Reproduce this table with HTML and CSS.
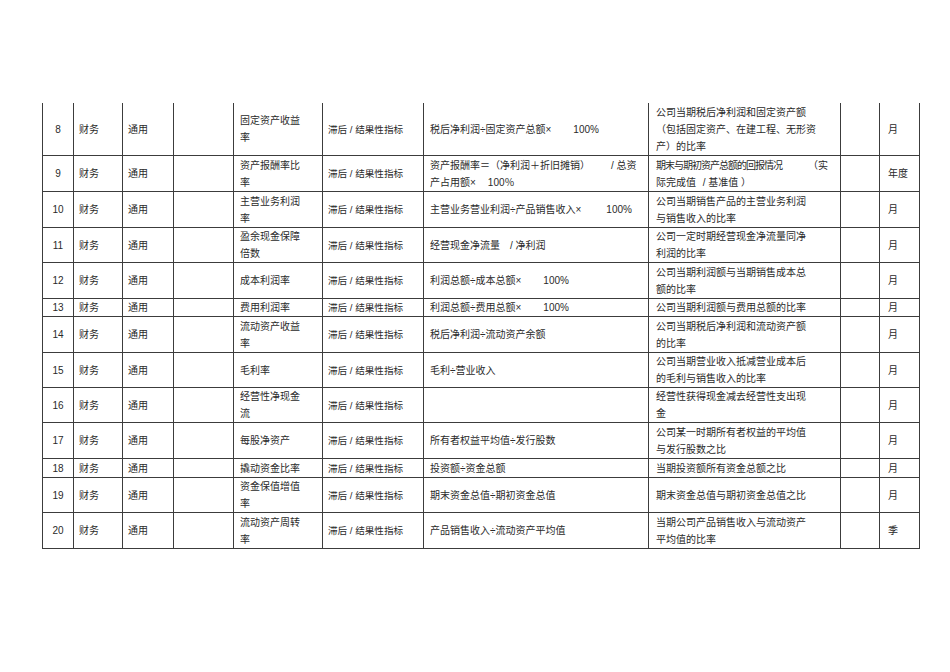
FILE: index.html
```html
<!DOCTYPE html>
<html lang="zh-CN">
<head>
<meta charset="utf-8">
<title>财务指标</title>
<link rel="stylesheet" href="styles.css">
</head>
<body>
<table class="kpi">
  <colgroup>
    <col class="c-no"><col class="c-dept"><col class="c-scope"><col class="c-blank"><col class="c-name"><col class="c-type"><col class="c-formula"><col class="c-desc"><col class="c-blank2"><col class="c-period">
  </colgroup>
  <tbody>
    <tr class="h53 first">
      <td class="no">8</td><td class="pl">财务</td><td class="pl">通用</td><td></td>
      <td class="name">固定资产收益<br>率</td>
      <td class="type">滞后 / 结果性指标</td>
      <td class="formula">税后净利润÷固定资产总额×<span class="gap">100%</span></td>
      <td class="desc">公司当期税后净利润和固定资产额<br>（包括固定资产、在建工程、无形资<br>产）的比率</td>
      <td></td><td class="period">月</td>
    </tr>
    <tr class="h36">
      <td class="no">9</td><td class="pl">财务</td><td class="pl">通用</td><td></td>
      <td class="name">资产报酬率比<br>率</td>
      <td class="type">滞后 / 结果性指标</td>
      <td class="formula">资产报酬率＝（净利润＋折旧摊销）<span class="gap-l">/ 总资</span><br>产占用额×<span class="gap-s">100％</span></td>
      <td class="desc"><span class="tight">期末与期初资产总额的回报情况</span><span class="gap-d">（实</span><br>际完成值 <span class="gap-u">/ 基准值 ）</span></td>
      <td></td><td class="period">年度</td>
    </tr>
    <tr class="h36">
      <td class="no">10</td><td class="pl">财务</td><td class="pl">通用</td><td></td>
      <td class="name">主营业务利润<br>率</td>
      <td class="type">滞后 / 结果性指标</td>
      <td class="formula">主营业务营业利润÷产品销售收入×<span class="gap-m">100%</span></td>
      <td class="desc">公司当期销售产品的主营业务利润<br>与销售收入的比率</td>
      <td></td><td class="period">月</td>
    </tr>
    <tr class="h35">
      <td class="no">11</td><td class="pl">财务</td><td class="pl">通用</td><td></td>
      <td class="name">盈余现金保障<br>倍数</td>
      <td class="type">滞后 / 结果性指标</td>
      <td class="formula">经营现金净流量<span class="gap-t">/ 净利润</span></td>
      <td class="desc">公司一定时期经营现金净流量同净<br>利润的比率</td>
      <td></td><td class="period">月</td>
    </tr>
    <tr class="h36">
      <td class="no">12</td><td class="pl">财务</td><td class="pl">通用</td><td></td>
      <td class="name">成本利润率</td>
      <td class="type">滞后 / 结果性指标</td>
      <td class="formula">利润总额÷成本总额×<span class="gap">100%</span></td>
      <td class="desc">公司当期利润额与当期销售成本总<br>额的比率</td>
      <td></td><td class="period">月</td>
    </tr>
    <tr class="h18">
      <td class="no">13</td><td class="pl">财务</td><td class="pl">通用</td><td></td>
      <td class="name">费用利润率</td>
      <td class="type">滞后 / 结果性指标</td>
      <td class="formula">利润总额÷费用总额×<span class="gap">100%</span></td>
      <td class="desc">公司当期利润额与费用总额的比率</td>
      <td></td><td class="period">月</td>
    </tr>
    <tr class="h36">
      <td class="no">14</td><td class="pl">财务</td><td class="pl">通用</td><td></td>
      <td class="name">流动资产收益<br>率</td>
      <td class="type">滞后 / 结果性指标</td>
      <td class="formula">税后净利润÷流动资产余额</td>
      <td class="desc">公司当期税后净利润和流动资产额<br>的比率</td>
      <td></td><td class="period">月</td>
    </tr>
    <tr class="h35">
      <td class="no">15</td><td class="pl">财务</td><td class="pl">通用</td><td></td>
      <td class="name">毛利率</td>
      <td class="type">滞后 / 结果性指标</td>
      <td class="formula">毛利÷营业收入</td>
      <td class="desc">公司当期营业收入抵减营业成本后<br>的毛利与销售收入的比率</td>
      <td></td><td class="period">月</td>
    </tr>
    <tr class="h35">
      <td class="no">16</td><td class="pl">财务</td><td class="pl">通用</td><td></td>
      <td class="name">经营性净现金<br>流</td>
      <td class="type">滞后 / 结果性指标</td>
      <td class="formula"></td>
      <td class="desc">经营性获得现金减去经营性支出现<br>金</td>
      <td></td><td class="period">月</td>
    </tr>
    <tr class="h36">
      <td class="no">17</td><td class="pl">财务</td><td class="pl">通用</td><td></td>
      <td class="name">每股净资产</td>
      <td class="type">滞后 / 结果性指标</td>
      <td class="formula">所有者权益平均值÷发行股数</td>
      <td class="desc">公司某一时期所有者权益的平均值<br>与发行股数之比</td>
      <td></td><td class="period">月</td>
    </tr>
    <tr class="h19">
      <td class="no">18</td><td class="pl">财务</td><td class="pl">通用</td><td></td>
      <td class="name">撬动资金比率</td>
      <td class="type">滞后 / 结果性指标</td>
      <td class="formula">投资额÷资金总额</td>
      <td class="desc">当期投资额所有资金总额之比</td>
      <td></td><td class="period">月</td>
    </tr>
    <tr class="h35">
      <td class="no">19</td><td class="pl">财务</td><td class="pl">通用</td><td></td>
      <td class="name">资金保值增值<br>率</td>
      <td class="type">滞后 / 结果性指标</td>
      <td class="formula">期末资金总值÷期初资金总值</td>
      <td class="desc">期末资金总值与期初资金总值之比</td>
      <td></td><td class="period">月</td>
    </tr>
    <tr class="h36">
      <td class="no">20</td><td class="pl">财务</td><td class="pl">通用</td><td></td>
      <td class="name">流动资产周转<br>率</td>
      <td class="type">滞后 / 结果性指标</td>
      <td class="formula">产品销售收入÷流动资产平均值</td>
      <td class="desc">当期公司产品销售收入与流动资产<br>平均值的比率</td>
      <td></td><td class="period">季</td>
    </tr>
  </tbody>
</table>
</body>
</html>
```

FILE: styles.css
```css
html, body {
  margin: 0;
  padding: 0;
  background: #ffffff;
}

body {
  padding: 103px 0 0 42px;
  font-family: "Liberation Sans", "Noto Sans CJK SC", sans-serif;
  font-size: 10px;
  color: #2a2a2a;
}

.kpi {
  border-collapse: collapse;
  table-layout: fixed;
  width: 877px;
}

.c-no { width: 31px; }
.c-dept { width: 49px; }
.c-scope { width: 51px; }
.c-blank { width: 60px; }
.c-name { width: 89px; }
.c-type { width: 101px; }
.c-formula { width: 225px; }
.c-desc { width: 192px; }
.c-blank2 { width: 39px; }
.c-period { width: 40px; }

.kpi td {
  border: 1px solid #3c3c3c;
  padding: 0;
  vertical-align: middle;
  line-height: 17px;
  white-space: nowrap;
  overflow: hidden;
}

.kpi tr.first td {
  border-top: none;
}

.h53 td { height: 52px; }
.h36 td { height: 35px; }
.h35 td { height: 34px; }
.h19 td { height: 18px; }
.h18 td { height: 17px; }

.kpi td.no {
  text-align: center;
}

.kpi td.pl {
  padding-left: 5px;
}

.kpi td.name {
  padding-left: 6px;
}

.kpi td.type {
  padding-left: 5px;
  font-size: 9.6px;
}

.kpi td.formula {
  padding-left: 6px;
}

.kpi td.desc {
  padding-left: 7px;
}

.kpi td.period {
  padding-left: 8px;
}

.tight { letter-spacing: -1px; }

.gap { margin-left: 22px; }
.gap-m { margin-left: 25px; }
.gap-s { margin-left: 12px; }
.gap-l { margin-left: 21px; }
.gap-d { margin-left: 26px; }
.gap-t { margin-left: 10px; }
.gap-u { margin-left: 4px; }
```
